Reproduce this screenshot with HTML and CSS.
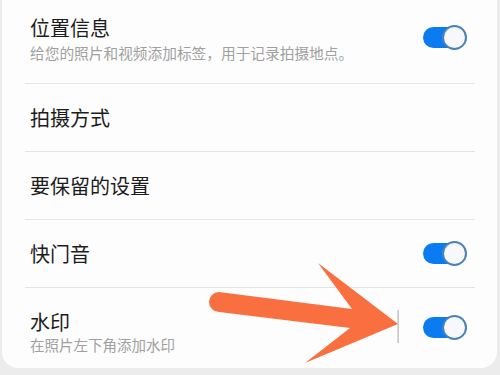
FILE: index.html
```html
<!DOCTYPE html>
<html lang="zh">
<head>
<meta charset="utf-8">
<link rel="stylesheet" href="styles.css">
</head>
<body>
<div class="card">
  <div class="row row-first">
    <div class="text">
      <div class="title">位置信息</div>
      <div class="sub">给您的照片和视频添加标签，用于记录拍摄地点。</div>
    </div>
    <span class="toggle toggle-first"><span class="knob"></span></span>
  </div>
  <div class="row row-plain">
    <div class="text"><div class="title">拍摄方式</div></div>
  </div>
  <div class="row row-plain">
    <div class="text"><div class="title">要保留的设置</div></div>
  </div>
  <div class="row row-plain">
    <div class="text"><div class="title">快门音</div></div>
    <span class="toggle"><span class="knob"></span></span>
  </div>
  <div class="row row-last">
    <div class="text">
      <div class="title">水印</div>
      <div class="sub">在照片左下角添加水印</div>
    </div>
    <span class="toggle toggle-last"><span class="knob"></span></span>
  </div>
</div>
<svg class="arrow" width="500" height="375" viewBox="0 0 500 375">
  <path d="M219 292 L352 309 L318 263 L398 324 L305 363 L350 328 L219 312 A10 10 0 0 1 219 292 Z" fill="#fa6f3f"/>
  <rect x="397.5" y="310" width="1.2" height="33" fill="#b5b5b5"/>
</svg>
</body>
</html>
```
FILE: styles.css
```css
html, body {
  margin: 0;
  padding: 0;
}
body {
  width: 500px;
  height: 375px;
  background: #ececec;
  font-family: "Noto Sans CJK SC", "Noto Sans", sans-serif;
  overflow: hidden;
  position: relative;
}
.card {
  margin-left: 2px;
  width: 495px;
  height: 368px;
  background: #fdfdfd;
  border-radius: 0 0 16px 16px;
  padding: 0 22px 0 23px;
  box-sizing: border-box;
}
.row {
  display: flex;
  align-items: center;
  padding: 0 8px 0 5px;
  border-bottom: 1px solid #e4e4e4;
}
.row-first {
  height: 84px;
  box-sizing: border-box;
  padding-top: 16px;
  padding-bottom: 20px;
}
.row-plain {
  height: 68px;
  box-sizing: border-box;
}
.row-last {
  border-bottom: none;
  padding-top: 22px;
}
.text {
  flex: 1;
}
.title {
  font-size: 20px;
  line-height: 24px;
  color: #1c1c1c;
}
.sub {
  font-size: 14.7px;
  line-height: 20px;
  margin-top: 3px;
  color: #a0a0a0;
  white-space: nowrap;
}
.row-last .sub {
  margin-top: 1px;
  font-size: 14.5px;
}
.toggle {
  position: relative;
  width: 44px;
  height: 25px;
  display: flex;
  align-items: center;
}
.toggle::before {
  content: "";
  width: 40px;
  height: 21px;
  border-radius: 11px;
  background: #0b7bf2;
}
.knob {
  position: absolute;
  right: 0;
  top: 0;
  width: 25px;
  height: 25px;
  box-sizing: border-box;
  border-radius: 50%;
  border: 2px solid #4a82b8;
  background: #f6f8fb;
}
.toggle-first {
  margin-bottom: 4px;
}
.toggle-last {
  margin-bottom: 10px;
}
.arrow {
  position: absolute;
  left: 0;
  top: 0;
}
```
